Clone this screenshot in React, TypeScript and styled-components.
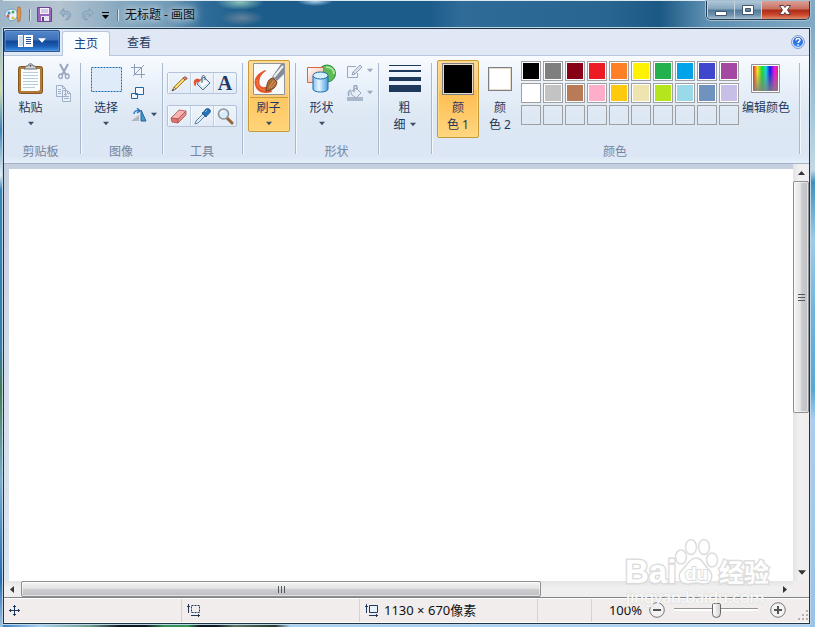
import React from "react";
import styled, { createGlobalStyle, css } from "styled-components";

const Global = createGlobalStyle`
  * { box-sizing: border-box; }
  body {
    margin: 0;
    font: 12px/17px "Noto Sans", "Noto Sans CJK SC", sans-serif;
    color: #1e395b;
  }
  button { font: inherit; color: inherit; padding: 0; margin: 0; border: 0; background: none; }
  svg { display: block; flex: none; }
`;

const Desktop = styled.div`
  min-height: 100vh;
  display: flex;
  flex-direction: column;
  padding: 0 5px 3px 3px;
  background:
    radial-gradient(ellipse 24px 8px at 240px 2px, #8cc4b8, transparent),
    radial-gradient(ellipse 18px 5px at 315px 1px, #b5d4ee, transparent),
    radial-gradient(ellipse 22px 8px at 242px 18px, #64829a, transparent),
    linear-gradient(90deg, #9fb6c8 0, #b4c4d0 60px, #86a8bf 120px, #7099b5 170px, #2f6c98 205px, #1c5c8b 250px, #1c5c8b 430px, #306b98 460px, #28658f 610px, #1b5985 660px, #5b8eb1 705px, #82aac4 100%) top / 100% 28px no-repeat,
    linear-gradient(180deg, #83aac4 28px, #a6c9dc 120px, #c4d9e4 170px, #3c91c1 182px, #9ccceb 240px, #70b4df 310px, #56a8d7 390px, #a9cdf4 420px, #98c3ea 100%) right / 5px 100% no-repeat,
    linear-gradient(180deg, #90b2c9 28px, #d4dda4 90px, #3b84ba 130px, #e2edf2 175px, #3586b8 190px, #327bac 350px, #467c49 390px, #76afd0 480px, #236bb4 580px, #9bc3e4 100%) left / 3px 100% no-repeat,
    linear-gradient(90deg, #357fc5 0, #a8cff2 40px, #6d9d8a 90px, #101820 120px, #101820 145px, #319557 165px, #319557 188px, #101820 200px, #101820 216px, #59775f 235px, #26382c 275px, #a6cff3 290px, #b0d2f4 100%) bottom / 100% 3px no-repeat;
`;

const TitleBar = styled.header`
  height: 28px;
  display: flex;
  align-items: center;
  border-top: 1px solid #dce9f1;
  color: #0b1116;
`;

const QuickAccess = styled.div`
  display: flex;
  align-items: center;
  gap: 7px;
  padding: 0 1px;
  flex: 1;
`;

const TitleRule = styled.span`
  width: 1px;
  height: 12px;
  background: #637a8c;
  box-shadow: 1px 0 #dae5eb;
`;

const Title = styled.h1`
  margin: 0;
  font-size: 12px;
  font-weight: 400;
  text-shadow: 0 0 6px #d5e2ea, 0 0 9px #d5e2ea;
`;

const IconButton = styled.button`
  display: flex;
  align-items: center;
  justify-content: center;
  gap: 4px;
`;

const Caption = styled.div`
  align-self: flex-start;
  display: flex;
  height: 19px;
  border: 1px solid #263b4e;
  border-top: 0;
  border-radius: 0 0 5px 5px;
  overflow: hidden;
  box-shadow: 0 0 0 1px #a5c0d2;
`;

const CaptionButton = styled.button<{ $close?: boolean }>`
  width: ${(p) => (p.$close ? 48 : 27)}px;
  display: flex;
  justify-content: center;
  align-items: center;
  border-left: 1px solid #c3d3df;
  background: ${(p) =>
    p.$close
      ? "linear-gradient(#d9a197, #c96e5e 45%, #aa2b17 50%, #c9442a 75%, #df8b6c)"
      : "linear-gradient(#b0c7d8, #84a4bc 45%, #4f7898 50%, #7396b0 80%, #a6c0d2)"};
`;

const Frame = styled.main`
  flex: 1;
  display: flex;
  flex-direction: column;
  border: 1px solid #1d3447;
  box-shadow: 0 0 0 1px #bdd5e5;
  background: #f0edec;
`;

const TabRow = styled.nav`
  height: 27px;
  display: flex;
  align-items: flex-end;
  background: #dfe8f4;
  border-bottom: 1px solid #b8c7dc;
  padding-right: 4px;
`;

const FileButton = styled.button`
  width: 56px;
  height: 22px;
  margin: 0 2px 3px 0;
  display: flex;
  align-items: center;
  justify-content: center;
  gap: 5px;
  border: 1px solid #2c5797;
  border-radius: 2px 2px 0 0;
  background: linear-gradient(#5387c9, #3d70b8 45%, #124797 50%, #1b5cb4 75%, #3c91e0);
  box-shadow: inset 0 0 0 1px #7aa4d866;
`;

const Tab = styled.button<{ $active?: boolean }>`
  width: ${(p) => (p.$active ? 48 : 58)}px;
  height: 25px;
  margin-bottom: -1px;
  padding-bottom: 2px;
  color: ${(p) => (p.$active ? "#15428b" : "#1e395b")};
  ${(p) =>
    p.$active &&
    css`
      background: #f9fcff;
      border: 1px solid #b8c7dc;
      border-bottom: 0;
      border-radius: 3px 3px 0 0;
    `}
`;

const HelpButton = styled.button`
  margin: 0 0 6px auto;
`;

const Ribbon = styled.div`
  height: 108px;
  display: flex;
  background: linear-gradient(#f8fbff, #e9f1fa 28px, #dde8f4 60px, #dce6f5 100px, #e4effa);
  border-bottom: 1px solid #a4b2c8;
`;

const Group = styled.section<{ $width: number }>`
  width: ${(p) => p.$width}px;
  flex: none;
  display: flex;
  flex-direction: column;
  padding: 4px 6px 0 0;
  background: linear-gradient(#a9b8cd, #a9b8cd) right 2px top 7px / 1px 91px no-repeat,
    linear-gradient(#f3f8fd, #f3f8fd) right 1px top 7px / 1px 91px no-repeat;
`;

const GroupBody = styled.div<{ $gap?: number }>`
  height: 83px;
  display: flex;
  align-items: flex-start;
  justify-content: center;
  gap: ${(p) => p.$gap ?? 0}px;
`;

const GroupLabel = styled.h2`
  margin: 0;
  text-align: center;
  font-size: 12px;
  font-weight: 400;
  color: #7485a0;
`;

const BigButton = styled.button<{ $selected?: boolean; $split?: boolean; $tall?: boolean }>`
  width: 42px;
  flex: none;
  height: ${(p) => (p.$tall ? 78 : 72)}px;
  display: flex;
  flex-direction: column;
  align-items: center;
  border: 1px solid transparent;
  white-space: nowrap;
  ${(p) =>
    p.$selected &&
    css`
      border-color: #c79b36;
      border-radius: 2px;
      box-shadow: inset 0 0 0 1px #ffda86;
      background: ${p.$split
        ? "linear-gradient(#fddda2 0, #fcca79 36px, #c79b36 36px, #c79b36 37px, #ffc763 37px, #ffd379 100%)"
        : "linear-gradient(#fbd99c 0, #fccb7c 38%, #ffbd51 40%, #ffd680 100%)"};
    `}
`;

const IconSlot = styled.span`
  height: 36px;
  flex: none;
  margin-bottom: 2px;
  display: flex;
  align-items: center;
  justify-content: center;
`;

const ArrowSlot = styled.span`
  height: 16px;
  flex: none;
  display: flex;
  align-items: center;
`;

const InlineLabel = styled.span`
  display: flex;
  align-items: center;
  gap: 4px;
`;

const SmallStack = styled.div<{ $start?: boolean }>`
  display: flex;
  flex-direction: column;
  align-items: ${(p) => (p.$start ? "flex-start" : "center")};
  gap: 4px;
  padding-top: 2px;
`;

const SmallButton = styled(IconButton)`
  height: 18px;
`;

const ToolRows = styled.div`
  display: flex;
  flex-direction: column;
  gap: 11px;
  padding-top: 12px;
`;

const ToolRow = styled.div`
  display: flex;
  height: 22px;
  border: 1px solid #b4c3d9;
  border-radius: 2px;
  background: linear-gradient(#edf4fb, #e2ebf6);
`;

const ToolButton = styled(IconButton)`
  width: 22px;
  box-shadow: inset 1px 0 #f6faff;

  & + & {
    width: 23px;
    border-left: 1px solid #c1cee0;
  }
`;

const CurrentColor = styled.span<{ $color: string; $size: number }>`
  width: ${(p) => p.$size}px;
  height: ${(p) => p.$size}px;
  background: ${(p) => p.$color};
  border: 1px solid #7d7f83;
  box-shadow: inset 0 0 0 1px #e8ddca;
`;

const Palette = styled.div`
  display: grid;
  grid-template-columns: repeat(10, 20px);
  grid-auto-rows: 20px;
  gap: 2px;
  padding-top: 1px;
`;

const Swatch = styled.button<{ $color?: string }>`
  border: 1px solid #a0a0a0;
  background: ${(p) => p.$color ?? "transparent"};
  box-shadow: ${(p) => (p.$color ? "inset 0 0 0 1px #fff" : "none")};
`;

const EditColors = styled(BigButton)`
  width: 54px;
`;

const Workspace = styled.div`
  flex: 1;
  display: grid;
  grid-template-columns: 1fr 16px;
  grid-template-rows: 1fr 16px;
`;

const CanvasArea = styled.div`
  display: flex;
  padding: 5px 0 0 5px;
  background: linear-gradient(#c6cfe0, #d5dfec 60%, #dce6f1);
`;

const Canvas = styled.div`
  flex: 1;
  background: #fff;
`;

const ScrollBar = styled.div<{ $vertical?: boolean }>`
  display: flex;
  flex-direction: ${(p) => (p.$vertical ? "column" : "row")};
  background: linear-gradient(${(p) => (p.$vertical ? "90deg" : "180deg")}, #e4e4e4, #f0f0f0 40%, #eee);
`;

const ScrollArrow = styled(IconButton)`
  width: 17px;
  height: 17px;
  flex: none;
`;

const Thumb = styled.div<{ $vertical?: boolean; $grow: number }>`
  flex: ${(p) => p.$grow} 1 0;
  display: flex;
  align-items: center;
  justify-content: center;
  border: 1px solid #8f8f8f;
  border-radius: 2px;
  box-shadow: inset 0 0 0 1px #ffffff88;
  background: linear-gradient(${(p) => (p.$vertical ? "90deg" : "180deg")}, #f5f5f5, #e3e3e3 45%, #cbcccf 55%, #bfc0c3);
`;

const Track = styled.div<{ $grow: number }>`
  flex: ${(p) => p.$grow} 1 0;
`;

const StatusBar = styled.footer`
  height: 26px;
  display: flex;
  align-items: center;
  border-top: 1px solid #7f8488;
  border-bottom: 1px solid #fff;
  box-shadow: inset 0 1px #fff;
  color: #111;
  font-size: 13px;
`;

const StatusCell = styled.div<{ $width: number }>`
  width: ${(p) => p.$width}px;
  height: 23px;
  display: flex;
  align-items: center;
  gap: 5px;
  padding-left: 5px;
  border-right: 1px solid #d5d3d2;
  white-space: nowrap;
`;

const ZoomArea = styled.div`
  flex: 1;
  align-self: stretch;
  display: flex;
  align-items: center;
  justify-content: flex-end;
  gap: 7px;
`;

const ZoomSlider = styled.input`
  appearance: none;
  width: 84px;
  height: 16px;
  margin: 0 5px 0 2px;
  background: linear-gradient(#949494, #949494) 0 6px / 100% 1px no-repeat,
    linear-gradient(#fff, #fff) 0 7px / 100% 2px no-repeat;

  &::-webkit-slider-thumb {
    appearance: none;
    width: 9px;
    height: 15px;
    background: linear-gradient(90deg, #fff, #d3d3d3);
    border: 1px solid #666;
    border-radius: 2px 2px 5px 5px;
  }
`;

const Grip = styled.span`
  align-self: flex-end;
  padding: 0 0 2px 2px;
`;

const Watermark = styled.div`
  position: absolute;
  right: 42px;
  bottom: 16px;
  pointer-events: none;
`;

const Screen = styled.div`
  position: relative;
`;

type ArrowProps = { color?: string; dir?: "down" | "up" | "left" | "right"; wide?: boolean };

const Arrow = ({ color = "#3b4d6b", dir = "down", wide }: ArrowProps) => {
  const d = {
    down: "M0 1h7L3.5 5z",
    up: "M0 6h7L3.5 2z",
    left: "M5 0v7L1 3.5z",
    right: "M2 0v7l4-3.5z",
  }[dir];
  const size = wide ? 8 : dir === "down" ? 6 : 7;
  return (
    <svg width={size} height={size} viewBox="0 0 7 7" fill={color}>
      <path d={d} />
    </svg>
  );
};

const AppIcon = () => (
  <svg width="18" height="18" viewBox="0 0 18 18">
    <path d="M1 9c0-4 4-6 8-6 4 1 5 4 4 8-1 3-6 5-8 3-1-2 1-3-1-3s-3 0-3-2z" fill="#e9f3fb" stroke="#6d9dbc" />
    <circle cx="5" cy="7" r="1.5" fill="#3188c9" />
    <circle cx="9" cy="6" r="1.5" fill="#49a957" />
    <circle cx="4" cy="10" r="1.4" fill="#d65142" />
    <circle cx="9" cy="12" r="1.6" fill="#e4bd3b" />
    <path d="M14 1l2 0 1 6-1 8-2 1-1-8z" fill="#e9933c" stroke="#a3662d" strokeWidth=".6" />
  </svg>
);

const SaveIcon = () => (
  <svg width="15" height="15" viewBox="0 0 15 15">
    <path d="M.5.5h13l1 1v13H.5z" fill="#9867bd" stroke="#6b4390" />
    <path d="M3 1h9v6H3z" fill="#f5f2fb" />
    <path d="M4 3h7M4 5h7" stroke="#b3a5c8" />
    <path d="M4 9h8v5H4z" fill="#e4e6ee" />
    <path d="M5 10h2v4H5z" fill="#61457d" />
  </svg>
);

const UndoIcon = ({ redo }: { redo?: boolean }) => (
  <svg width="14" height="15" viewBox="0 0 15 15">
    <g transform={redo ? "translate(15 0) scale(-1 1)" : undefined} fill="none" strokeLinejoin="round">
      <path d="M5 1v3h3c5 0 6 5 2 9H7c4-3 4-6 1-6H5v3L1 5.500z" fill="#9eb5c8" stroke="#7d9cb6" />
    </g>
  </svg>
);

const FileIcon = () => (
  <svg width="15" height="12" viewBox="0 0 15 12">
    <path d="M0 0h15v12H0z" fill="#fff" />
    <path d="M1 1h4v10H1z" fill="#c9dcf0" />
    <path d="M5.500 0v12" stroke="#4c78b4" />
    <path d="M8 2.500h5M8 4.500h5M8 6.500h5M8 8.500h5" stroke="#2f568c" />
  </svg>
);

const HelpIcon = () => (
  <svg width="14" height="14" viewBox="0 0 14 14">
    <defs>
      <linearGradient id="help" y2="1" x2="0">
        <stop stopColor="#2456ca" />
        <stop offset="1" stopColor="#398bff" />
      </linearGradient>
    </defs>
    <circle cx="7" cy="7" r="6.4" fill="#e8f1ff" stroke="#7295ca" />
    <circle cx="7" cy="7" r="5" fill="url(#help)" />
    <path d="M5 5.5c0-3 4.5-2.500 4 0C8.800 6.700 7 6.700 7 8M7 9.300v1.400" fill="none" stroke="#fff" strokeWidth="1.5" />
  </svg>
);

const PasteIcon = () => (
  <svg width="26" height="32" viewBox="0 0 26 32">
    <rect x=".5" y="3.5" width="24" height="27" rx="2" fill="#b27a39" stroke="#865620" />
    <path d="M3 6h19v21l-2 1H3z" fill="#fcfdff" />
    <path d="M5 9.500h15M5 12.500h15M5 15.500h15M5 18.500h15M5 21.500h15M5 24.500h12" stroke="#b8cbdc" />
    <path d="M6 6l2-3h2c0-3 5-3 5 0h2l2 3z" fill="#d2d4d7" stroke="#676b70" />
    <circle cx="12.5" cy="2.800" r="1" fill="#53575e" />
  </svg>
);

const CutIcon = () => (
  <svg width="12" height="17" viewBox="0 0 12 17" fill="none" stroke="#98a7bd">
    <path d="M2 1l6 11M10 1L4 12" strokeWidth="2" />
    <ellipse cx="2.600" cy="13.300" rx="1.800" ry="2.300" strokeWidth="1.400" />
    <ellipse cx="9.200" cy="13.300" rx="1.800" ry="2.300" strokeWidth="1.400" />
  </svg>
);

const CopyIcon = () => (
  <svg width="16" height="17" viewBox="0 0 16 17" fill="#eaf0f7" stroke="#a0b0c7">
    <path d="M.5.5h6l3 3v8h-9zM6.500 5.500h5l3 3v8h-8z" />
    <path d="M6.500.5v3h3M11.500 5.500v3h3M2 4.500h3M2 6.500h3M2 8.500h3M8 9.500h3M8 11.500h5M8 13.500h5" fill="none" />
  </svg>
);

const SelectIcon = () => (
  <svg width="31" height="25" viewBox="0 0 31 25">
    <path d="M.5.5h30v24H.5z" fill="#dfebf9" stroke="#1d6aa8" strokeDasharray="2 1" />
  </svg>
);

const CropIcon = () => (
  <svg width="14" height="14" viewBox="0 0 14 14" fill="none" stroke="#8e9eb6">
    <path d="M0 3.500h10.500V14M3.500 0v10.500H14M2 12L13 1" />
  </svg>
);

const ResizeIcon = () => (
  <svg width="14" height="14" viewBox="0 0 14 14" fill="#f3f9ff" stroke="#1b67a6">
    <path d="M.5 7.500h6v5h-6zM4.500 1.500h8v7h-8z" />
  </svg>
);

const RotateIcon = () => (
  <svg width="16" height="14" viewBox="0 0 16 14">
    <path d="M0 13h8V7z" fill="#b4b7bb" />
    <path d="M10 13V2l5 11z" fill="#3e9cd5" stroke="#23659a" />
    <path d="M3 6c0-3 2-4 5-3M6 0l3 3-3 2" fill="none" stroke="#2873bb" strokeWidth="1.400" />
  </svg>
);

const PencilIcon = () => (
  <svg width="17" height="17" viewBox="0 0 17 17">
    <path d="M1 16l2-4 2 2z" fill="#efd5a5" stroke="#615338" strokeWidth=".7" />
    <path d="M3 12L12 3l2 2-9 9z" fill="#f4c443" stroke="#8f6b24" strokeWidth=".8" />
    <path d="M4.500 12.500l8-8" stroke="#fff1a5" />
    <path d="M12 3l1-1c1-1 4 1 3 2l-2 1z" fill="#d98478" stroke="#8a4c46" strokeWidth=".7" />
    <path d="M1 16l1-2 1 1z" fill="#222" />
  </svg>
);

const BucketIcon = () => (
  <svg width="18" height="17" viewBox="0 0 18 17">
    <path d="M6 6l5-4 6 6-7 7-6-6z" fill="#d2e4f2" stroke="#51718d" />
    <path d="M7 8l5-3 3 3-6 4z" fill="#f8fcff" />
    <path d="M9 8V2c0-2 3-2 3 0v3" fill="none" stroke="#506679" />
    <path d="M8 5C3 2 0 5 1 9c0 2 2 3 2 0 0-2 1-2 3-2z" fill="#e5512d" />
  </svg>
);

const LetterIcon = styled.span`
  font: 700 20px/20px "Liberation Serif", serif;
  color: #1f3864;
`;

const EraserIcon = () => (
  <svg width="18" height="16" viewBox="0 0 18 16" stroke="#a8534e" strokeWidth=".8">
    <path d="M1 10l8-8 7 1-8 8z" fill="#f5b3b1" />
    <path d="M1 10l7 1v4l-6-1z" fill="#de7472" />
    <path d="M8 11l8-8v4l-8 8z" fill="#e88c89" />
  </svg>
);

const PickerIcon = () => (
  <svg width="17" height="17" viewBox="0 0 17 17">
    <path d="M1 16l1-3 7-7 2 2-7 7z" fill="#dbebf5" stroke="#5b86a6" />
    <path d="M8 5l4 4 1-2c4-2 4-5 2-6s-4 0-5 3z" fill="#2575bc" stroke="#16518b" />
    <path d="M11 4l2-2" stroke="#94c9f2" />
  </svg>
);

const MagnifierIcon = () => (
  <svg width="17" height="17" viewBox="0 0 17 17">
    <path d="M10 10l5 5" stroke="#98653b" strokeWidth="3" strokeLinecap="round" />
    <circle cx="6.500" cy="6" r="5" fill="#d8edf9" stroke="#8b9499" strokeWidth="1.600" />
    <path d="M3.500 6c0-2 1-3 3-3" fill="none" stroke="#fff" />
  </svg>
);

const BrushIcon = () => (
  <svg width="32" height="32" viewBox="0 0 32 32">
    <path d="M.5.5h31v31H.5z" fill="#f8f9fa" stroke="#91969c" />
    <path d="M13 7C5 9 0 16 2 22c2 8 9 9 17 7l-3-7c-4 3-7 3-9 0-2-5 1-11 6-14z" fill="#e7552a" />
    <path d="M4 17c0 8 4 11 12 10" fill="none" stroke="#f48a4c" />
    <path d="M31 1v10l-7 7-5-4L28 1z" fill="#858c98" />
    <path d="M21 14L30 3" stroke="#eef1f4" strokeWidth="2" />
    <path d="M13 28c1-6 1-12 7-13l4 4c-1 7-7 9-11 9z" fill="#ad6b38" stroke="#744321" />
    <path d="M16 25l5-8M18 25l5-6" stroke="#d79a62" />
  </svg>
);

const ShapesIcon = () => (
  <svg width="30" height="30" viewBox="0 0 30 30">
    <defs>
      <linearGradient id="sq" x2="1" y2="1">
        <stop stopColor="#fff" />
        <stop offset="1" stopColor="#f0a98d" />
      </linearGradient>
      <linearGradient id="cyl">
        <stop stopColor="#84c3f0" />
        <stop offset=".4" stopColor="#e5f6ff" />
        <stop offset="1" stopColor="#4c9ee1" />
      </linearGradient>
    </defs>
    <circle cx="20" cy="9.500" r="8.500" fill="#5fbb58" stroke="#268c36" />
    <path d="M19 3c5 0 8 3 8 7" fill="none" stroke="#a7e59d" strokeWidth="2" />
    <path d="M.5 3.500h16v15H.5z" fill="url(#sq)" stroke="#df623e" />
    <path d="M6 12v13c0 4 15 4 15 0V12" fill="url(#cyl)" stroke="#1d69aa" />
    <ellipse cx="13.500" cy="11.500" rx="7.500" ry="3.500" fill="#d7f0ff" stroke="#1d69aa" />
  </svg>
);

const OutlineIcon = () => (
  <svg width="16" height="15" viewBox="0 0 16 15" fill="none" stroke="#98a7bd">
    <path d="M9 2.500H.5v11h10V9" />
    <path d="M5 11l1-3 7-7 2 2-7 7z" fill="#d9e1ea" />
    <path d="M6 8l2 2" />
  </svg>
);

const FillIcon = () => (
  <svg width="16" height="17" viewBox="0 0 16 17">
    <path d="M0 12h16v4H0z" fill="#a9b7ca" />
    <path d="M4 7l5-4 5 5-5 5-5-4z" fill="#e7edf4" stroke="#98a7bd" />
    <path d="M7 7V2c0-2 3-2 3 0v3M4 5C1 6 1 9 2 11" fill="none" stroke="#98a7bd" strokeWidth="1.500" />
  </svg>
);

const ThicknessIcon = () => (
  <svg width="32" height="28" viewBox="0 0 32 28" fill="#1e395b">
    <path d="M0 0h32v1H0zM0 5h32v2H0zM0 12h32v4H0zM0 20h32v7H0z" />
  </svg>
);

const SpectrumIcon = () => (
  <svg width="30" height="30" viewBox="0 0 30 30">
    <defs>
      <linearGradient id="hue">
        <stop stopColor="#ef2420" />
        <stop offset=".18" stopColor="#f2e51f" />
        <stop offset=".36" stopColor="#1fd52e" />
        <stop offset=".52" stopColor="#18d7dc" />
        <stop offset=".68" stopColor="#1518e8" />
        <stop offset=".86" stopColor="#e51adc" />
        <stop offset="1" stopColor="#ee2467" />
      </linearGradient>
      <linearGradient id="fade" x2="0" y2="1">
        <stop offset=".2" stopColor="#808080" stopOpacity="0" />
        <stop offset="1" stopColor="#808080" stopOpacity=".85" />
      </linearGradient>
    </defs>
    <path d="M.5.5h28v28H.5z" fill="#fff" stroke="#949494" />
    <path d="M2 2h25v25H2z" fill="url(#hue)" />
    <path d="M2 2h25v25H2z" fill="url(#fade)" />
  </svg>
);

const GripLines = ({ vertical }: { vertical?: boolean }) => (
  <svg width="9" height="9" viewBox="0 0 9 9" stroke="#55585c">
    <path d={vertical ? "M1 1.500h7M1 4.500h7M1 7.500h7" : "M1.500 1v7M4.500 1v7M7.500 1v7"} />
  </svg>
);

const MoveIcon = () => (
  <svg width="11" height="11" viewBox="0 0 11 11" fill="none" stroke="#1e395b">
    <path d="M5.500 0v11M0 5.500h11M4 1.500h3M4 9.500h3M1.500 4v3M9.500 4v3" />
  </svg>
);

const SizeIcon = ({ dashed }: { dashed?: boolean }) => (
  <svg width="14" height="13" viewBox="0 0 14 13" fill="none" stroke="#1e395b">
    <path d="M4.500 1.500h8v7h-8z" strokeDasharray={dashed ? "2 1" : undefined} fill={dashed ? "none" : "#e8f2fb"} />
    <path d="M1.500 0v9M0 2.500h3M4 11.500h9M11.500 10v3" />
  </svg>
);

const ZoomIcon = ({ plus }: { plus?: boolean }) => (
  <svg width="16" height="16" viewBox="0 0 16 16">
    <circle cx="8" cy="8" r="7.300" fill="#f3f3f3" stroke="#777" />
    <path d={plus ? "M4 8h8M8 4v8" : "M4 8h8"} stroke="#555" strokeWidth="2" />
  </svg>
);

const BaiduMark = () => (
  <svg width="148" height="76" viewBox="0 0 148 76" fill="#fff" stroke="#d9d9d9" strokeWidth="1.500">
    <g opacity=".88">
      <ellipse cx="56" cy="22" rx="5.500" ry="7" />
      <ellipse cx="66" cy="12" rx="5.500" ry="7.500" />
      <ellipse cx="79" cy="12" rx="5.500" ry="7.500" />
      <ellipse cx="87" cy="25" rx="5.500" ry="7" />
      <path d="M71 23c7 0 8 8 13 12 5 5 3 14-5 14-4 0-5-1-8-1s-5 1-9 1c-8 0-10-9-5-14 5-4 7-12 14-12z" />
      <g fontFamily="Liberation Sans, sans-serif" fontWeight="700" paintOrder="stroke" strokeWidth="3">
        <text x="0" y="48" fontSize="33">Bai</text>
        <text x="60" y="45" fontSize="19" strokeWidth="2">du</text>
        <text x="94" y="47" fontSize="25" fontFamily="Noto Sans CJK SC, sans-serif">经验</text>
        <text x="1" y="68" fontSize="16" fontWeight="400" strokeWidth="1" fontFamily="Noto Sans, sans-serif">jingyan.baidu.com</text>
      </g>
    </g>
  </svg>
);

const colors: (string | undefined)[] = [
  "#000000", "#7f7f7f", "#880015", "#ed1c24", "#ff7f27", "#fff200", "#22b14c", "#00a2e8", "#3f48cc", "#a349a4",
  "#ffffff", "#c3c3c3", "#b97a57", "#ffaec9", "#ffc90e", "#efe4b0", "#b5e61d", "#99d9ea", "#7092be", "#c8bfe7",
  ...Array(10).fill(undefined),
];

export default function App() {
  return (
    <Screen>
      <Global />
      <Desktop>
        <TitleBar>
          <QuickAccess>
            <AppIcon />
            <TitleRule />
            <IconButton aria-label="保存"><SaveIcon /></IconButton>
            <IconButton aria-label="撤消" disabled><UndoIcon /></IconButton>
            <IconButton aria-label="重做" disabled><UndoIcon redo /></IconButton>
            <IconButton aria-label="自定义快速访问工具栏">
              <svg width="9" height="8" viewBox="0 0 9 8"><path d="M1 1h7v1H1zM1 4h7L4.500 8z" /></svg>
            </IconButton>
            <TitleRule />
            <Title>无标题 - 画图</Title>
          </QuickAccess>
          <Caption>
            <CaptionButton aria-label="最小化">
              <svg width="13" height="14" viewBox="0 0 13 14"><path d="M.5 8.500h11v4H.5z" fill="#fff" stroke="#44576a" /></svg>
            </CaptionButton>
            <CaptionButton aria-label="最大化">
              <svg width="13" height="11" viewBox="0 0 13 11"><path d="M.5.500h11v9H.5zM3.500 3.500v3h5v-3z" fillRule="evenodd" fill="#fff" stroke="#44576a" /></svg>
            </CaptionButton>
            <CaptionButton $close aria-label="关闭">
              <svg width="13" height="11" viewBox="0 0 13 11"><path d="M.5.500h4L6 2.500 7.500.500h4l-3 4.500 3 4.500h-4L6 7.500 4.500 9.500h-4l3-4.500z" fill="#fff" stroke="#573c40" /></svg>
            </CaptionButton>
          </Caption>
        </TitleBar>

        <Frame>
          <TabRow>
            <FileButton aria-label="画图"><FileIcon /><Arrow color="#fff" wide /></FileButton>
            <Tab $active>主页</Tab>
            <Tab>查看</Tab>
            <HelpButton aria-label="帮助"><HelpIcon /></HelpButton>
          </TabRow>

          <Ribbon>
            <Group $width={79}>
              <GroupBody $gap={4}>
                <BigButton><IconSlot><PasteIcon /></IconSlot>粘贴<ArrowSlot><Arrow /></ArrowSlot></BigButton>
                <SmallStack>
                  <SmallButton disabled aria-label="剪切"><CutIcon /></SmallButton>
                  <SmallButton disabled aria-label="复制"><CopyIcon /></SmallButton>
                </SmallStack>
              </GroupBody>
              <GroupLabel>剪贴板</GroupLabel>
            </Group>
            <Group $width={82}>
              <GroupBody $gap={4}>
                <BigButton><IconSlot><SelectIcon /></IconSlot>选择<ArrowSlot><Arrow /></ArrowSlot></BigButton>
                <SmallStack $start>
                  <SmallButton disabled aria-label="裁剪"><CropIcon /></SmallButton>
                  <SmallButton aria-label="重新调整大小"><ResizeIcon /></SmallButton>
                  <SmallButton aria-label="旋转"><RotateIcon /><Arrow /></SmallButton>
                </SmallStack>
              </GroupBody>
              <GroupLabel>图像</GroupLabel>
            </Group>
            <Group $width={80}>
              <GroupBody>
                <ToolRows>
                  <ToolRow>
                    <ToolButton aria-label="铅笔"><PencilIcon /></ToolButton>
                    <ToolButton aria-label="用颜色填充"><BucketIcon /></ToolButton>
                    <ToolButton aria-label="文本"><LetterIcon>A</LetterIcon></ToolButton>
                  </ToolRow>
                  <ToolRow>
                    <ToolButton aria-label="橡皮擦"><EraserIcon /></ToolButton>
                    <ToolButton aria-label="颜色选取器"><PickerIcon /></ToolButton>
                    <ToolButton aria-label="放大镜"><MagnifierIcon /></ToolButton>
                  </ToolRow>
                </ToolRows>
              </GroupBody>
              <GroupLabel>工具</GroupLabel>
            </Group>
            <Group $width={53}>
              <GroupBody>
                <BigButton $selected $split><IconSlot><BrushIcon /></IconSlot>刷子<ArrowSlot><Arrow /></ArrowSlot></BigButton>
              </GroupBody>
            </Group>
            <Group $width={83}>
              <GroupBody $gap={4}>
                <BigButton><IconSlot><ShapesIcon /></IconSlot>形状<ArrowSlot><Arrow /></ArrowSlot></BigButton>
                <SmallStack>
                  <SmallButton disabled aria-label="轮廓"><OutlineIcon /><Arrow color="#98a7bd" /></SmallButton>
                  <SmallButton disabled aria-label="填充"><FillIcon /><Arrow color="#98a7bd" /></SmallButton>
                </SmallStack>
              </GroupBody>
              <GroupLabel>形状</GroupLabel>
            </Group>
            <Group $width={53}>
              <GroupBody>
                <BigButton $tall><IconSlot><ThicknessIcon /></IconSlot>粗<InlineLabel>细<Arrow /></InlineLabel></BigButton>
              </GroupBody>
            </Group>
            <Group $width={368}>
              <GroupBody>
                <BigButton $tall $selected>
                  <IconSlot><CurrentColor $color="#000" $size={32} /></IconSlot>颜<span>色 1</span>
                </BigButton>
                <BigButton $tall>
                  <IconSlot><CurrentColor $color="#fff" $size={24} /></IconSlot>颜<span>色 2</span>
                </BigButton>
                <Palette>
                  {colors.map((c, i) => (
                    <Swatch key={i} $color={c} aria-label={c ?? "自定义颜色"} />
                  ))}
                </Palette>
                <EditColors><IconSlot><SpectrumIcon /></IconSlot>编辑颜色</EditColors>
              </GroupBody>
              <GroupLabel>颜色</GroupLabel>
            </Group>
          </Ribbon>

          <Workspace>
            <CanvasArea><Canvas /></CanvasArea>
            <ScrollBar $vertical>
              <ScrollArrow aria-label="向上滚动"><Arrow dir="up" color="#333" /></ScrollArrow>
              <Thumb $vertical $grow={231}><GripLines vertical /></Thumb>
              <Track $grow={151} />
              <ScrollArrow aria-label="向下滚动"><Arrow color="#333" wide /></ScrollArrow>
            </ScrollBar>
            <ScrollBar>
              <ScrollArrow aria-label="向左滚动"><Arrow dir="left" color="#333" /></ScrollArrow>
              <Thumb $grow={519}><GripLines /></Thumb>
              <Track $grow={235} />
              <ScrollArrow aria-label="向右滚动"><Arrow dir="right" color="#333" /></ScrollArrow>
            </ScrollBar>
          </Workspace>

          <StatusBar>
            <StatusCell $width={178}><MoveIcon /></StatusCell>
            <StatusCell $width={178}><SizeIcon dashed /></StatusCell>
            <StatusCell $width={178}><SizeIcon />1130 × 670像素</StatusCell>
            <StatusCell $width={54} />
            <ZoomArea>
              <label htmlFor="zoom">100%</label>
              <IconButton aria-label="缩小"><ZoomIcon /></IconButton>
              <ZoomSlider id="zoom" type="range" min={0} max={100} defaultValue={50} />
              <IconButton aria-label="放大"><ZoomIcon plus /></IconButton>
              <Grip>
                <svg width="14" height="10" viewBox="0 0 14 10" fill="#b5b1af">
                  <path d="M11 0h2v2h-2zM7 4h2v2H7zM11 4h2v2h-2zM3 8h2v2H3zM7 8h2v2H7zM11 8h2v2h-2z" />
                </svg>
              </Grip>
            </ZoomArea>
          </StatusBar>
        </Frame>
      </Desktop>
      <Watermark><BaiduMark /></Watermark>
    </Screen>
  );
}
